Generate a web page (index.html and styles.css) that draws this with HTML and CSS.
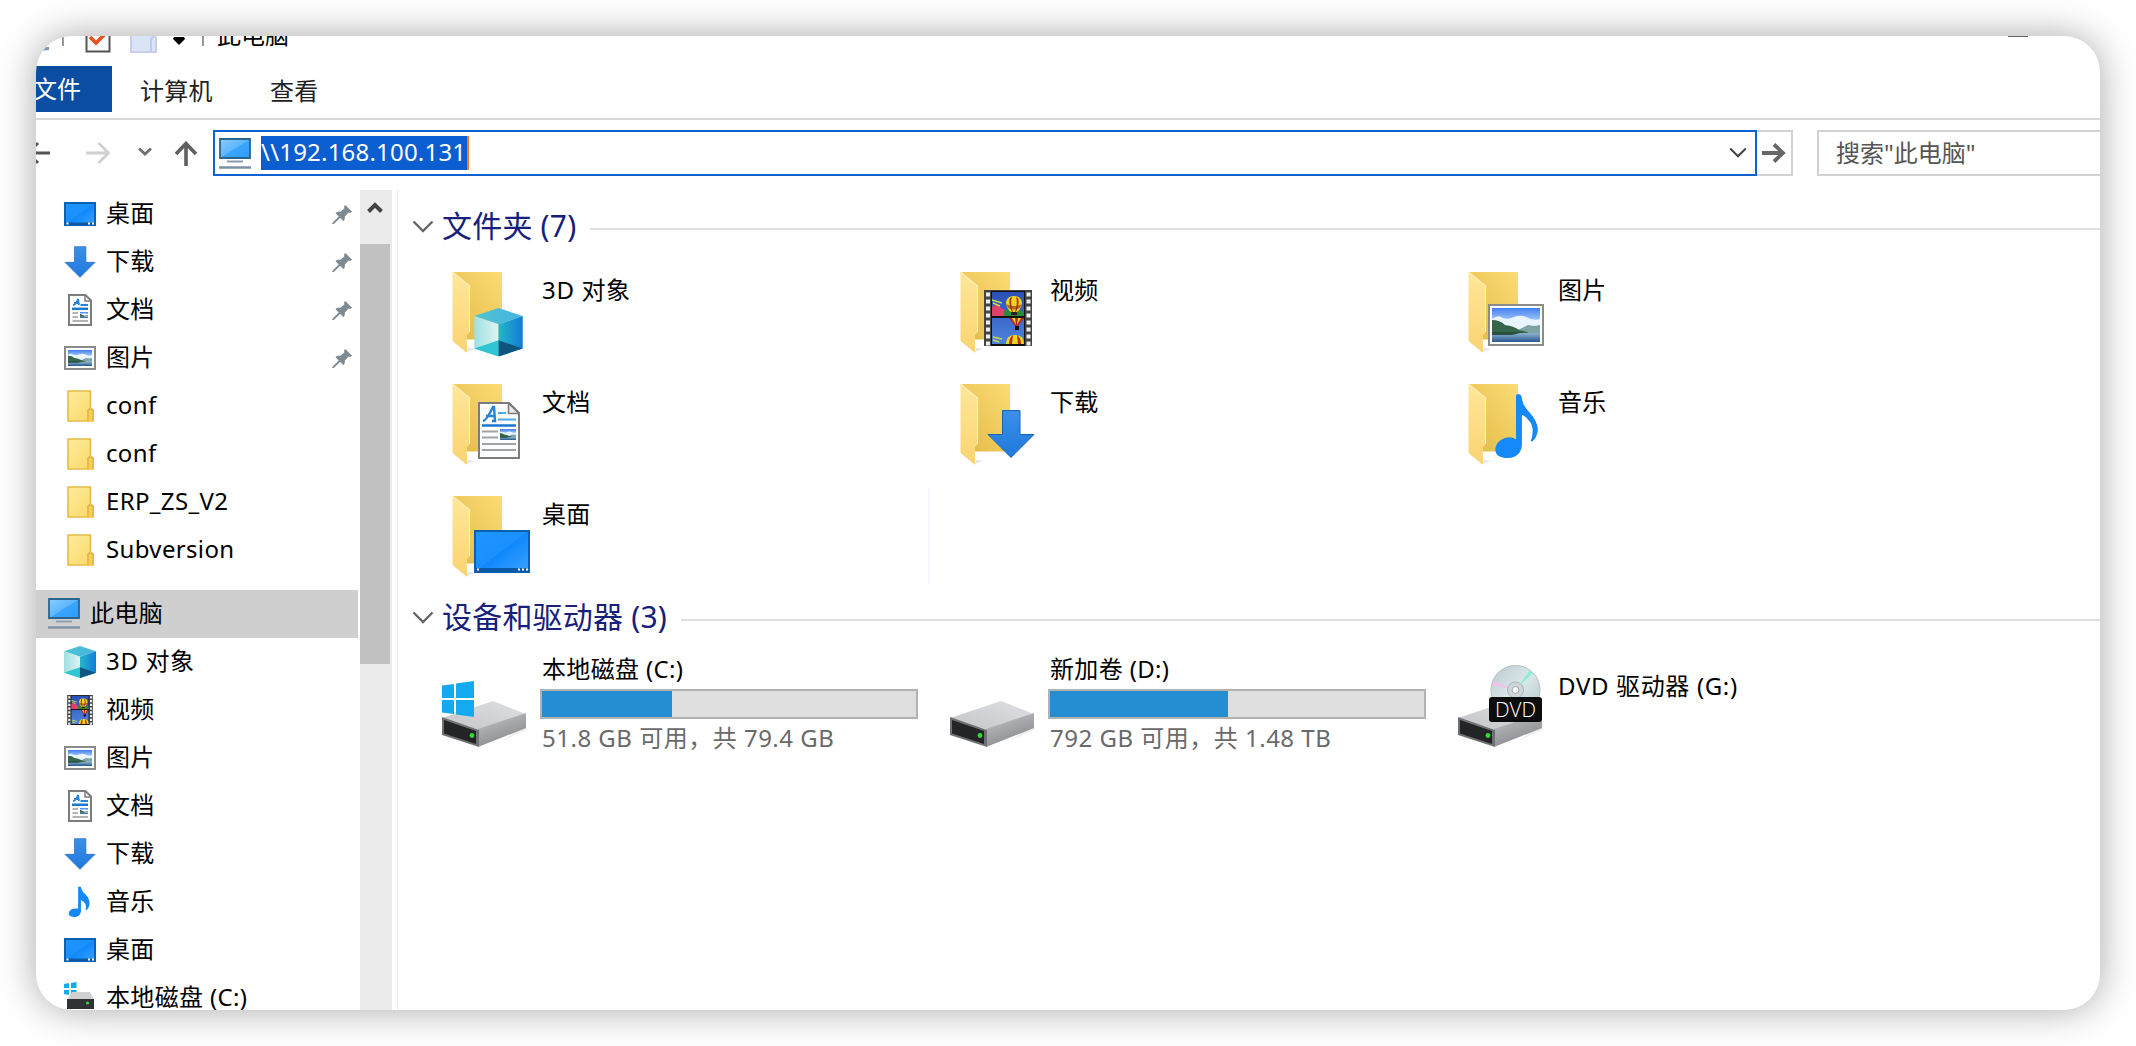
FILE: index.html
```html
<!DOCTYPE html>
<html lang="zh-CN">
<head>
<meta charset="utf-8">
<title>此电脑</title>
<link rel="stylesheet" href="styles.css">
</head>
<body>
<svg class="defs" width="0" height="0" aria-hidden="true">
  <defs>
    <linearGradient id="g-back" x1="0" y1="1" x2="1" y2="0"><stop offset="0" stop-color="#e0b84a"/><stop offset=".45" stop-color="#eec95a"/><stop offset="1" stop-color="#fcdc76"/></linearGradient>
    <linearGradient id="g-front" x1="0" y1="0" x2="0" y2="1"><stop offset="0" stop-color="#ffe69a"/><stop offset="1" stop-color="#fbd471"/></linearGradient>
    <linearGradient id="g-small" x1="0" y1="0" x2="1" y2="1"><stop offset="0" stop-color="#ffeaa0"/><stop offset="1" stop-color="#fbd965"/></linearGradient>
    <linearGradient id="g-screen" x1="0" y1="0" x2="1" y2="1"><stop offset="0" stop-color="#8bcdff"/><stop offset=".5" stop-color="#5cb6ff"/><stop offset=".51" stop-color="#3aa5fd"/><stop offset="1" stop-color="#2f9cf7"/></linearGradient>
    <linearGradient id="g-desk" x1="0" y1="0" x2="1" y2="1"><stop offset="0" stop-color="#1f95ff"/><stop offset=".49" stop-color="#1a90ff"/><stop offset=".5" stop-color="#0f88fc"/><stop offset="1" stop-color="#3ba2ff"/></linearGradient>
    <linearGradient id="g-top"><stop offset="0" stop-color="#4fc3cc"/><stop offset="1" stop-color="#45b4e4"/></linearGradient>
    <linearGradient id="g-left"><stop offset="0" stop-color="#9fe0e0"/><stop offset="1" stop-color="#dff3f5"/></linearGradient>
    <linearGradient id="g-right"><stop offset="0" stop-color="#25b6c9"/><stop offset="1" stop-color="#127bd6"/></linearGradient>
    <linearGradient id="g-sky" x1="0" y1="0" x2="0" y2="1"><stop offset="0" stop-color="#3f80ef"/><stop offset=".55" stop-color="#d5e9ff"/><stop offset="1" stop-color="#bcd8f2"/></linearGradient>
    <linearGradient id="g-water" x1="0" y1="0" x2="0" y2="1"><stop offset="0" stop-color="#8db4d0"/><stop offset="1" stop-color="#27568f"/></linearGradient>
    <linearGradient id="g-film" x1="0" y1="0" x2="0" y2="1"><stop offset="0" stop-color="#2c50b8"/><stop offset="1" stop-color="#4d83dd"/></linearGradient>
    <linearGradient id="g-arrow" x1="0" y1="0" x2="0" y2="1"><stop offset="0" stop-color="#3c8fe8"/><stop offset="1" stop-color="#1f78dc"/></linearGradient>
    <linearGradient id="g-drvtop" x1="0" y1="1" x2="1" y2="0"><stop offset="0" stop-color="#c4c5c8"/><stop offset="1" stop-color="#dfe0e3"/></linearGradient>
    <linearGradient id="g-drvside" x1="0" y1="0" x2=".5" y2="1"><stop offset="0" stop-color="#c6c7c9"/><stop offset="1" stop-color="#88898c"/></linearGradient>
    <linearGradient id="g-disc" x1="0" y1="0" x2="1" y2="1"><stop offset="0" stop-color="#b9c9cd"/><stop offset=".5" stop-color="#dbe8ea"/><stop offset="1" stop-color="#b4c4c6"/></linearGradient>

    <symbol id="folder" viewBox="0 0 96 96">
      <path d="M27 88 35 85 28 84Z" fill="#e6e6e6"/>
      <path d="M12.500 8H62V75.500H27Z" fill="url(#g-back)"/>
      <path d="M12.500 8 30 22V68L27 71V89L12.500 77Z" fill="url(#g-front)"/>
      <path d="M12.500 8 29.500 22V68" fill="none" stroke="#fff0b8" stroke-width="1.200"/>
    </symbol>
    <symbol id="cube" viewBox="0 0 48 48">
      <path d="M24 0 48 8 24 16 0 8Z" fill="url(#g-top)"/>
      <path d="M0 8 24 16V48L0 40Z" fill="url(#g-left)"/>
      <path d="M48 8 24 16V48L48 40Z" fill="url(#g-right)"/>
      <path d="M0 40 24 32V48Z" fill="#2fc5d2"/>
      <path d="M48 40 24 32V48Z" fill="#0e5580"/>
    </symbol>
    <symbol id="scene" viewBox="0 0 48 34" preserveAspectRatio="none">
      <path d="M0 0H48V34H0Z" fill="url(#g-sky)"/>
      <path d="M0 11Q6 6 11 10 17 12 22 9 30 6 36 10 42 13 48 11V24H0Z" fill="#e9f4ff"/>
      <path d="M22 24 36 17 42 18 48 17V25H22Z" fill="#7ea3a3"/>
      <path d="M0 12Q8 12 13 17 22 18 27 22 34 23 38 26H0Z" fill="#35664b"/>
      <path d="M0 25H48V34H0Z" fill="url(#g-water)"/>
      <path d="M0 24H32L20 27H0Z" fill="#28503c"/>
    </symbol>
    <symbol id="picture" viewBox="0 0 56 42">
      <path d="M1 1H55V41H1Z" fill="#fff" stroke="#8b8b8b" stroke-width="2"/>
      <use href="#scene" x="4" y="4" width="48" height="34"/>
    </symbol>
    <symbol id="picture-s" viewBox="0 0 32 24">
      <path d="M1 1H31V23H1Z" fill="#fff" stroke="#8b8b8b" stroke-width="2"/>
      <use href="#scene" x="4" y="4" width="24" height="16"/>
    </symbol>
    <symbol id="desktop" viewBox="0 0 56 43">
      <path d="M1 1H55V42H1Z" fill="url(#g-desk)" stroke="#0b60b3" stroke-width="2"/>
      <path d="M2 38H54V42H2Z" fill="#0b5aa5"/>
      <path d="M3 38.500h2v2h-2zM44 38.500h2v2h-2zM48 38.500h2v2h-2zM52 38.500h2v2h-2z" fill="#fff"/>
    </symbol>
    <symbol id="desktop-s" viewBox="0 0 32 24">
      <path d="M1 1H31V23H1Z" fill="url(#g-desk)" stroke="#0b60b3" stroke-width="2"/>
      <path d="M1 20.500H31V23H1Z" fill="#0b5aa5"/>
      <path d="M2.500 20.500h2v2h-2zM24 20.500h2v2h-2zM28 20.500h2v2h-2z" fill="#fff"/>
    </symbol>
    <symbol id="down" viewBox="0 0 48 49">
      <path d="M15.500 1H33V25H47L24 48 1 25H15.500Z" fill="url(#g-arrow)" stroke="#1a64b8"/>
    </symbol>
    <symbol id="note" viewBox="0 0 44 66">
      <path d="M21 2Q21 0 24 0 27 1 27 5 28 12 35 19 44 29 43 38 42 44 38 48H36Q41 33 33 26 30 22 27 21V52Q26 64 13 65 0 65 0 56 1 46 14 44 18 44 21 46Z" fill="#1589f8"/>
    </symbol>
    <symbol id="note-s" viewBox="0 0 24 34">
      <path d="M10 1Q11 0 13 1 14 6 18 9 23 14 22 20 21 25 18 26 20 18 13 15V27Q12 33 6 33 0 33 0 29 1 23 10 24Z" fill="#1589f8"/>
    </symbol>
    <symbol id="doc" viewBox="0 0 42 57">
      <path d="M1 1H31L41 11V56H1Z" fill="#fbfcfd" stroke="#7c7c7c" stroke-width="2"/>
      <path d="M30.500 1V11.500H41Z" fill="#e9e9e9" stroke="#7c7c7c" stroke-width="1.600"/>
      <path d="M5 19Q8 19 15 5H16L17 19H14M8 14H17" fill="none" stroke="#2484d8" stroke-width="2.400"/>
      <path d="M20 11H28M20 17.500H38" stroke="#4fabe8" stroke-width="2"/>
      <path d="M4 23.500H38" stroke="#1878cf" stroke-width="2.600"/>
      <path d="M4 29.500H20M4 35.500H20M4 42H38M4 48H38" stroke="#a2a2a2" stroke-width="2"/>
      <use href="#scene" x="22" y="27" width="16" height="11"/>
    </symbol>
    <symbol id="doc-s" viewBox="0 0 24 32">
      <path d="M1 1H17.500L23 6.500V31H1Z" fill="#fbfcfd" stroke="#7c7c7c" stroke-width="2"/>
      <path d="M17 1V7H23" fill="none" stroke="#7c7c7c" stroke-width="1.500"/>
      <path d="M5 11Q8 11 10 5L11 11M6 9H11M12.500 11H20" fill="none" stroke="#2484d8" stroke-width="1.800"/>
      <path d="M4 14.800H20" stroke="#1878cf" stroke-width="2.400"/>
      <path d="M4.500 19H10M4.500 23H10M4.500 27H20" stroke="#9a9a9a" stroke-width="1.700"/>
      <use href="#scene" x="12" y="18" width="8" height="6"/>
    </symbol>
    <symbol id="balloon" viewBox="0 0 18 20">
      <path d="M1 8Q1 0 9 0T17 8Q16 13 12 16V19H6V16Q2 13 1 8Z" fill="#e8d820"/>
      <path d="M5 2Q3 8 7 16H8Q5 8 7 1ZM11 1Q13 8 10 16H11Q15 8 13 2Z" fill="#bd2a1e"/>
      <path d="M1 8Q9 12 17 8L15 12Q9 15 3 12Z" fill="#8a2a18" opacity=".6"/>
      <path d="M6 16H12V19H6Z" fill="#222"/>
    </symbol>
    <symbol id="film" viewBox="0 0 48 56">
      <path d="M0 0H48V56H0Z" fill="#444"/>
      <path d="M7 1H41V56H7Z" fill="#111"/>
      <path d="M8 2H40V26H8ZM8 28H40V54H8Z" fill="url(#g-film)"/>
      <path d="M8 17 13 14 17 18 22 21V26H8Z" fill="#e0406a"/>
      <path d="M20 21Q30 17 40 22V26H20Z" fill="#2a8a3a"/>
      <path d="M8 10 18 13M9 13 16 16M9 47 18 49M9 50 15 52" stroke="#c9d84e" stroke-width="1.600"/>
      <use href="#balloon" x="21" y="6" width="18" height="20"/>
      <path d="M25 28H40L34 36V40H31V36Z" fill="#b82820"/>
      <path d="M28 28H31L32 35ZM34 28H37L33 35Z" fill="#e8d820"/>
      <path d="M31 36H35V40H31Z" fill="#111"/>
      <path d="M22 54Q22 45 31 45T40 54Z" fill="#e8d820"/>
      <path d="M25 54Q25 48 29 45L28 54ZM34 54 33 45Q37 48 37 54Z" fill="#bd2a1e"/>
      <path d="M4 2.500V56M44.500 2.500V56" stroke="#eee" stroke-width="4" stroke-dasharray="4 3"/>
    </symbol>
    <symbol id="pc" viewBox="0 0 32 32">
      <path d="M1 1H31V20H1Z" fill="url(#g-screen)" stroke="#28658f" stroke-width="1.800"/>
      <path d="M8 23.500H24" stroke="#8a9dae" stroke-width="1.800"/>
      <path d="M0 29.500H32" stroke="#7e92a6" stroke-width="2.400"/>
    </symbol>
    <symbol id="folder-s" viewBox="0 0 28 32">
      <path d="M1 1H23.500V19L26 20V31H1Z" fill="url(#g-small)" stroke="#e3bd48" stroke-width="1.600"/>
      <path d="M21 31V21Q21 19 23.500 19T26 21V31" fill="#f5cf5c" stroke="#dcb23c" stroke-width="1.400"/>
    </symbol>
    <symbol id="pin" viewBox="0 0 22 22">
      <path d="M14 1 21 8 19 9.500 17.500 9 13.500 13Q14 16 12 18L8.500 14.500 2 21 0 21 1 19 7 13 3.500 9.500Q6 7.500 9 8L13 4.500 12.500 2.500Z" fill="#7f8a93"/>
    </symbol>
    <symbol id="drive" viewBox="0 0 86 46">
      <path d="M60 40 86 28 82 25Z" fill="#eee"/>
      <path d="M0 17 51 0 84 13 37 29Z" fill="url(#g-drvtop)"/>
      <path d="M36 28 84 12V27L36 46Z" fill="url(#g-drvside)"/>
      <path d="M0 16 37 29V46L0 34Z" fill="#6f7073"/>
      <path d="M2 19 34 30V43L2 32.500Z" fill="#232425"/>
      <circle cx="30" cy="34.500" r="2.400" fill="#2fdc2f"/>
    </symbol>
    <symbol id="winlogo" viewBox="0 0 32 36">
      <path d="M0 4.500 12 3V17H0ZM14 2.500 32 0V17H14ZM0 19H12V33L0 31.500ZM14 19H32V36L14 33.500Z" fill="#14aaf0"/>
    </symbol>
    <symbol id="chev" viewBox="0 0 22 14"><path d="M1.500 1.500 11 11 20.500 1.500" fill="none" stroke="currentColor" stroke-width="2.400"/></symbol>
  </defs>
</svg>

<div class="window">
  <header class="titlebar">
    <svg class="tb-save" viewBox="0 0 10 4"><path d="M0 4 4 0H10V3Z" fill="#7d97b5"/></svg>
    <i class="tb-sep"></i>
    <svg class="tb-check" viewBox="0 0 26 26"><path d="M1.500 0V24.500H24.500V0" fill="#f9f9fb" stroke="#555" stroke-width="2"/><path d="M5 10 11 16 20 7" fill="none" stroke="#e8501c" stroke-width="3.600"/></svg>
    <svg class="tb-folder" viewBox="0 0 28 26"><path d="M1 0H24V8L26 11V25H1Z" fill="#d9e4f6" stroke="#cccdec" stroke-width="2"/><path d="M21 25V12L24 9" fill="none" stroke="#c4c9e8" stroke-width="2"/></svg>
    <svg class="tb-more" viewBox="0 0 12 8"><path d="M1 0H11L12 2 6 8 0 2Z" fill="#000"/></svg>
    <i class="tb-sep tb-sep2"></i>
    <span class="tb-title">此电脑</span>
    <i class="tb-min"></i>
  </header>

  <nav class="ribbon">
    <span class="tab tab-file">文件</span>
    <span class="tab">计算机</span>
    <span class="tab">查看</span>
  </nav>

  <div class="navbar">
    <svg class="nav-back" viewBox="0 0 24 24"><path d="M24 12H2M12 2 2 12 12 22" fill="none" stroke="#555" stroke-width="3"/></svg>
    <svg class="nav-fwd" viewBox="0 0 24 24"><path d="M0 12H22M12.500 2 22.500 12 12.500 22" fill="none" stroke="#d0d0d0" stroke-width="2.800"/></svg>
    <svg class="nav-recent" viewBox="0 0 14 9"><path d="M1 1.500 7 7 13 1.500" fill="none" stroke="#707070" stroke-width="2.800"/></svg>
    <svg class="nav-up" viewBox="0 0 24 25"><path d="M12 25V3M2 13 12 2.500 22 13" fill="none" stroke="#606060" stroke-width="3.600"/></svg>
    <div class="address">
      <svg class="addr-pc"><use href="#pc"/></svg>
      <span class="addr-text">\\192.168.100.131</span>
      <svg class="addr-chev"><use href="#chev"/></svg>
    </div>
    <div class="go"><svg viewBox="0 0 24 20"><path d="M0 10H20M12 1.500 21 10 12 18.500" fill="none" stroke="#666" stroke-width="3.800"/></svg></div>
    <div class="search">搜索"此电脑"</div>
  </div>

  <div class="body">
    <aside class="tree">
      <div class="row"><svg class="ic"><use href="#desktop-s" y="4" height="24"/></svg><span>桌面</span><svg class="pin"><use href="#pin"/></svg></div>
      <div class="row"><svg class="ic"><use href="#down"/></svg><span>下载</span><svg class="pin"><use href="#pin"/></svg></div>
      <div class="row"><svg class="ic"><use href="#doc-s"/></svg><span>文档</span><svg class="pin"><use href="#pin"/></svg></div>
      <div class="row"><svg class="ic"><use href="#picture-s" y="4" height="24"/></svg><span>图片</span><svg class="pin"><use href="#pin"/></svg></div>
      <div class="row"><svg class="ic"><use href="#folder-s" x="1"/></svg><span>conf</span></div>
      <div class="row"><svg class="ic"><use href="#folder-s" x="1"/></svg><span>conf</span></div>
      <div class="row"><svg class="ic"><use href="#folder-s" x="1"/></svg><span>ERP_ZS_V2</span></div>
      <div class="row"><svg class="ic"><use href="#folder-s" x="1"/></svg><span>Subversion</span></div>
      <div class="row root"><svg class="ic"><use href="#pc"/></svg><span>此电脑</span></div>
      <div class="row"><svg class="ic"><use href="#cube"/></svg><span class="loose">3D 对象</span></div>
      <div class="row"><svg class="ic"><use href="#film" y="1" height="30"/></svg><span>视频</span></div>
      <div class="row"><svg class="ic"><use href="#picture-s" y="4" height="24"/></svg><span>图片</span></div>
      <div class="row"><svg class="ic"><use href="#doc-s"/></svg><span>文档</span></div>
      <div class="row"><svg class="ic"><use href="#down"/></svg><span>下载</span></div>
      <div class="row"><svg class="ic"><use href="#note-s"/></svg><span>音乐</span></div>
      <div class="row"><svg class="ic"><use href="#desktop-s" y="4" height="24"/></svg><span>桌面</span></div>
      <div class="row"><svg class="ic" viewBox="0 0 32 32"><path d="M0 2 5 1V6H0ZM7 1 12.500 0V6H7ZM0 8H5V13L0 12ZM7 8H12.500V13.500L7 13Z" fill="#14aaf0"/><path d="M8 10H26L30 18H3Z" fill="#cfd0d2"/><path d="M3 17H30V27H3Z" fill="#303133"/><circle cx="23.500" cy="21" r="1.600" fill="#2fdc2f"/></svg><span>本地磁盘 (C:)</span></div>
    </aside>
    <div class="scroll">
      <div class="scroll-up"><svg viewBox="0 0 16 13"><path d="M1.500 10.500 8 4 14.500 10.500" fill="none" stroke="#444" stroke-width="4"/></svg></div>
      <div class="thumb"></div>
    </div>

    <main class="content">
      <h2 class="group"><svg><use href="#chev"/></svg><span>文件夹 (7)</span><i></i></h2>
      <div class="grid">
        <div class="item"><svg class="big" viewBox="0 0 96 96"><use href="#folder"/><use href="#cube" x="34" y="44" width="49" height="48.500"/></svg><span class="loose">3D 对象</span></div>
        <div class="item"><svg class="big" viewBox="0 0 96 96"><use href="#folder"/><use href="#film" x="36" y="26" width="48" height="56"/></svg><span>视频</span></div>
        <div class="item"><svg class="big" viewBox="0 0 96 96"><use href="#folder"/><use href="#picture" x="32" y="40" width="56" height="42"/></svg><span>图片</span></div>
        <div class="item"><svg class="big" viewBox="0 0 96 96"><use href="#folder"/><use href="#doc" x="38" y="26" width="42" height="57"/></svg><span>文档</span></div>
        <div class="item"><svg class="big" viewBox="0 0 96 96"><use href="#folder"/><use href="#down" x="39" y="33.500" width="48" height="49"/></svg><span>下载</span></div>
        <div class="item"><svg class="big" viewBox="0 0 96 96"><use href="#folder"/><use href="#note" x="39" y="18" width="44" height="65"/></svg><span>音乐</span></div>
        <div class="item focus"><svg class="big" viewBox="0 0 96 96"><use href="#folder"/><use href="#desktop" x="34" y="42" width="56" height="43"/></svg><span>桌面</span></div>
      </div>
      <h2 class="group group-drives"><svg><use href="#chev"/></svg><span>设备和驱动器 (3)</span><i></i></h2>
      <div class="grid">
        <div class="drive"><svg class="big" viewBox="0 0 96 96"><use href="#drive" x="2" y="48" width="86" height="46"/><use href="#winlogo" x="2" y="28" width="32" height="36"/></svg>
          <div class="info"><span>本地磁盘 (C:)</span><div class="bar"><b style="width:34.8%"></b></div><small>51.8 GB 可用，共 79.4 GB</small></div></div>
        <div class="drive"><svg class="big" viewBox="0 0 96 96"><use href="#drive" x="2" y="48" width="86" height="46"/></svg>
          <div class="info"><span>新加卷 (D:)</span><div class="bar"><b style="width:47.5%"></b></div><small>792 GB 可用，共 1.48 TB</small></div></div>
        <div class="drive"><svg class="big" viewBox="0 0 96 96"><use href="#drive" x="2" y="48" width="86" height="46"/>
          <circle cx="59.500" cy="37" r="24.500" fill="url(#g-disc)" stroke="#b5bfc1"/><path d="M59.500 37 36 32 38 28Z" fill="#efc3ea"/><path d="M61 35 77 20 74 17Z" fill="#8fecd2"/><circle cx="59.500" cy="37" r="8" fill="#cdd7d9" stroke="#aab6b8"/><circle cx="59.500" cy="37" r="3.500" fill="#f8f8f8" stroke="#9aa"/>
          <rect x="33" y="44" width="53" height="25" rx="3" fill="#0c0c0c"/><text class="dvd" x="59.500" y="63.500" text-anchor="middle" textLength="41" lengthAdjust="spacingAndGlyphs">DVD</text></svg>
          <div class="info info-dvd"><span class="loose">DVD 驱动器 (G:)</span></div></div>
      </div>
    </main>
  </div>
</div>
</body>
</html>
```
FILE: styles.css
```css
* { box-sizing: border-box; }
body {
  margin: 0;
  width: 2136px;
  height: 1046px;
  padding: 36px;
  overflow: hidden;
  background: #fff;
  color: #000;
  font: 24px/30px "Noto Sans", "Noto Sans CJK SC", sans-serif;
  letter-spacing: .35px;
}
svg { display: block; flex: none; }
.defs { position: absolute; }
.window {
  display: flex;
  flex-direction: column;
  width: 2064px;
  height: 974px;
  border-radius: 36px;
  overflow: hidden;
  background: #fff;
  box-shadow: 0 0 38px rgba(0, 0, 0, .35);
}

/* title bar */
.titlebar { display: flex; align-items: flex-start; height: 30px; flex: none; }
.tb-save { width: 10px; height: 4px; margin: 11px 0 0 3px; }
.tb-sep { width: 2px; height: 10px; margin-left: 13px; background: #999; }
.tb-sep2 { margin-left: 17px; }
.tb-check { width: 26px; height: 26px; margin: -9px 0 0 21px; }
.tb-folder { width: 28px; height: 26px; margin: -9px 0 0 19px; }
.tb-more { width: 12px; height: 8px; margin: 1px 0 0 15px; }
.tb-title { margin: -16px 0 0 13px; letter-spacing: 0; }
.tb-min { width: 20px; height: 1px; margin-left: auto; margin-right: 72px; background: #666; }

/* ribbon */
.ribbon { display: flex; height: 54px; flex: none; border-bottom: 2px solid #d8d8d8; letter-spacing: .3px; color: #222; }
.tab { margin-left: 57px; line-height: 50px; }
.tab:nth-child(2) { margin-left: 28px; }
.tab-file { width: 76px; height: 46px; margin: 0; line-height: 45px; background: #0a4da2; color: #fff; text-indent: -3px; letter-spacing: 0; }

/* navigation bar */
.navbar { display: flex; align-items: center; height: 70px; flex: none; padding-bottom: 4px; }
.nav-back { width: 24px; height: 24px; margin-left: -10px; }
.nav-fwd { width: 24px; height: 24px; margin-left: 36px; }
.nav-recent { width: 14px; height: 9px; margin: -4px 0 0 28px; }
.nav-up { width: 24px; height: 25px; margin-left: 22px; }
.address { display: flex; align-items: center; width: 1544px; height: 46px; margin-left: 15px; padding-left: 4px; border: 2px solid #0c62d2; }
.addr-pc { width: 32px; height: 32px; margin-top: 1px; }
.addr-text { height: 34px; margin: 0 0 0 10px; padding-right: 1px; background: #0a5ed0; border-right: 2px solid #f07c20; color: #fff; line-height: 32px; letter-spacing: .2px; }
.addr-chev { width: 18px; height: 12px; margin: 0 8px 0 auto; color: #444; }
.go { display: flex; align-items: center; justify-content: center; width: 36px; height: 46px; border: 2px solid #d2d2d2; border-left: 0; }
.go svg { width: 24px; height: 20px; }
.search { flex: 1; height: 46px; margin-left: 24px; padding-left: 17px; border: 2px solid #d2d2d2; border-right: 0; color: #555; line-height: 41px; letter-spacing: 0; }

/* folder tree */
.body { display: flex; flex: 1; min-height: 0; overflow: hidden; }
.tree { width: 322px; flex: none; }
.row { display: flex; align-items: center; height: 48px; padding: 0 5px 0 28px; }
.row span { margin: -3px 0 0 10px; }
.row .loose, .item .loose, .info .loose { letter-spacing: .65px; }
.ic { width: 32px; height: 32px; }
.pin { width: 21px; height: 21px; margin-left: auto; }
.root { margin-top: 16px; padding-left: 12px; background: #cfcfcf; }
.scroll { width: 38px; flex: none; margin-left: 2px; padding-right: 5px; background: #ebebeb; background-clip: content-box; border-right: 1px solid #e9e9e9; }
.scroll-up { display: flex; justify-content: center; height: 54px; padding: 11px 2px 0 0; }
.scroll-up svg { width: 16px; height: 13px; }
.thumb { width: 30px; height: 420px; background: #c1c1c1; }

/* content pane */
.content { flex: 1; min-width: 0; padding-left: 42px; }
.group { display: flex; align-items: center; height: 74px; margin: 0 0 0 -28px; color: #17207a; font-size: 30px; font-weight: 400; letter-spacing: .2px; }
.group svg { width: 22px; height: 14px; color: #666; }
.group span { margin: -2px 14px 0 8px; }
.group i { flex: 1; height: 2px; margin-top: 4px; background: #e0e0e0; }
.group-drives { height: 52px; padding-bottom: 17px; }
.grid { display: grid; grid-template-columns: repeat(3, 508px); grid-auto-rows: 112px; }
.item { display: flex; }
.item span { margin: 11px 0 0 6px; }
.big { width: 96px; height: 96px; }
.focus { height: 96px; margin-right: 18px; border-right: 2px solid #f4f7fc; }
.drive { display: flex; }
.drive .big { margin-top: 1px; }
.info { display: flex; flex-direction: column; width: 378px; margin-left: 4px; }
.info span { padding-left: 2px; line-height: 33px; }
.bar { height: 30px; margin-top: 4px; border: 2px solid #b2b2b2; background: #dfdfdf; }
.bar b { display: block; height: 100%; background: #258dd1; }
.info small { padding-left: 2px; color: #6a6a6a; font-size: 24px; line-height: 34px; margin-top: 2px; letter-spacing: .5px; white-space: nowrap; }
.info-dvd { padding-top: 17px; }
.dvd { fill: #fff; font: 300 21px "Open Sans", sans-serif; letter-spacing: 0; }
```
